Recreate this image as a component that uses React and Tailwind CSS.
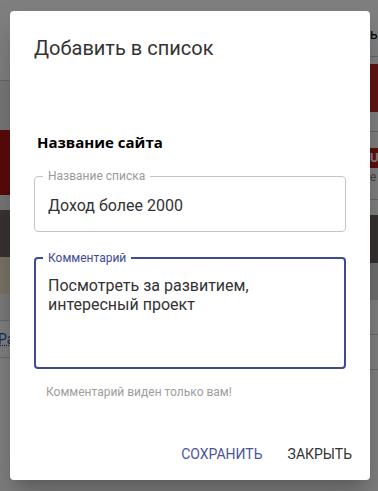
import React from 'react';

const LeftStrip = () => (
  <div className="flex w-[12px] flex-col">
    <div className="h-[80px] bg-white" />
    <div className="h-[50px] border-t border-[#cfcfcf] bg-[#f1f1f1]" />
    <div className="h-[65px] bg-[#b51616]" />
    <div className="h-[15px] bg-[#eeeeee]" />
    <div className="h-[47px] bg-[#756767]" />
    <div className="h-[37px] bg-[#f5e6cc]" />
    <div className="h-[26px] bg-[#f4f4f4]" />
    <div className="flex h-[38px] items-center border-t border-b border-[#d4d4d4] bg-white">
      <span className="-ml-[2px] text-[14px] text-[#2a5db0] underline decoration-dotted">Pa</span>
    </div>
    <div className="flex-1 bg-white" />
  </div>
);

const RightStrip = () => (
  <div className="flex w-[8px] flex-col">
    <div className="flex h-[56px] items-start bg-white pt-[24px]">
      <span className="text-[14px] text-black">ы</span>
    </div>
    <div className="h-[8px] border-t border-[#cfcfcf] bg-white" />
    <div className="h-[48px] bg-[#c42a2a]" />
    <div className="h-[20px] border-b border-[#cfcfcf] bg-white" />
    <div className="h-[16px] bg-white" />
    <div className="h-[20px] bg-[#c01818] text-[13px] font-bold leading-[20px] text-white">U</div>
    <div className="h-[32px] border-b border-[#cfcfcf] bg-white text-[12px] text-[#888]">e</div>
    <div className="h-[15px] bg-white" />
    <div className="h-[48px] bg-[#6d6262]" />
    <div className="h-[37px] bg-[#dcdcdc]" />
    <div className="h-[35px] border-b border-[#d4d4d4] bg-white" />
    <div className="h-[35px] border-b border-[#d4d4d4] bg-white" />
    <div className="flex-1 bg-white" />
  </div>
);

const OutlinedField = ({ label, focused, multiline, children }) => (
  <div
    className={
      focused
        ? 'relative rounded-[4px] border-2 border-[#3f4a92] px-[12px] pt-[17px] h-[112px]'
        : 'relative rounded-[4px] border border-[#c4c4c4] px-[13px] pt-[19px] h-[56px]'
    }
  >
    <span
      className={
        'absolute top-[-8px] bg-white px-[5px] text-[12px] leading-[14px] ' +
        (focused ? 'left-[7px] text-[#3f4a92]' : 'left-[8px] text-[#9a9a9a]')
      }
    >
      {label}
    </span>
    <div className={'text-[16px] leading-[19px] text-[#333] ' + (multiline ? 'whitespace-pre-line' : '')}>
      {children}
    </div>
  </div>
);

export default function App() {
  return (
    <div
      className="relative h-[491px] w-[378px] overflow-hidden bg-white"
      style={{ fontFamily: 'Roboto, "Liberation Sans", sans-serif' }}
    >
      {/* page behind the dialog */}
      <div className="flex h-full justify-between">
        <LeftStrip />
        <RightStrip />
      </div>

      {/* backdrop */}
      <div className="absolute inset-0 bg-black/50" />

      {/* dialog */}
      <div className="absolute left-[10px] top-[11px] flex h-[469px] w-[360px] flex-col rounded-[4px] bg-white shadow-[0_11px_15px_-7px_rgba(0,0,0,0.2),0_24px_38px_3px_rgba(0,0,0,0.14)]">
        <h2 className="px-[24px] pt-[21px] text-[20px] font-normal leading-[32px] text-[#333]">
          Добавить в список
        </h2>

        <div className="px-[24px] pt-[66px]">
          <div
            className="pl-[3px] text-[15px] font-bold leading-[24px] text-black"
            style={{ fontFamily: '"Open Sans", "Liberation Sans", sans-serif' }}
          >
            Название сайта
          </div>

          <div className="mt-[22px]">
            <OutlinedField label="Название списка">Доход более 2000</OutlinedField>
          </div>

          <div className="mt-[25px]">
            <OutlinedField label="Комментарий" focused multiline>
              {'Посмотреть за развитием,\nинтересный проект'}
            </OutlinedField>
          </div>

          <p className="ml-[12px] mt-[15px] text-[12px] leading-[16px] text-[#9e9e9e]">
            Комментарий виден только вам!
          </p>
        </div>

        <div className="flex-1" />

        <div className="flex h-[35px] items-start justify-end gap-[25px] pr-[18px]">
          <button className="text-[14px] uppercase leading-[18px] text-[#4b559c]">Сохранить</button>
          <button className="text-[14px] uppercase leading-[18px] text-[#333]">Закрыть</button>
        </div>
      </div>
    </div>
  );
}
